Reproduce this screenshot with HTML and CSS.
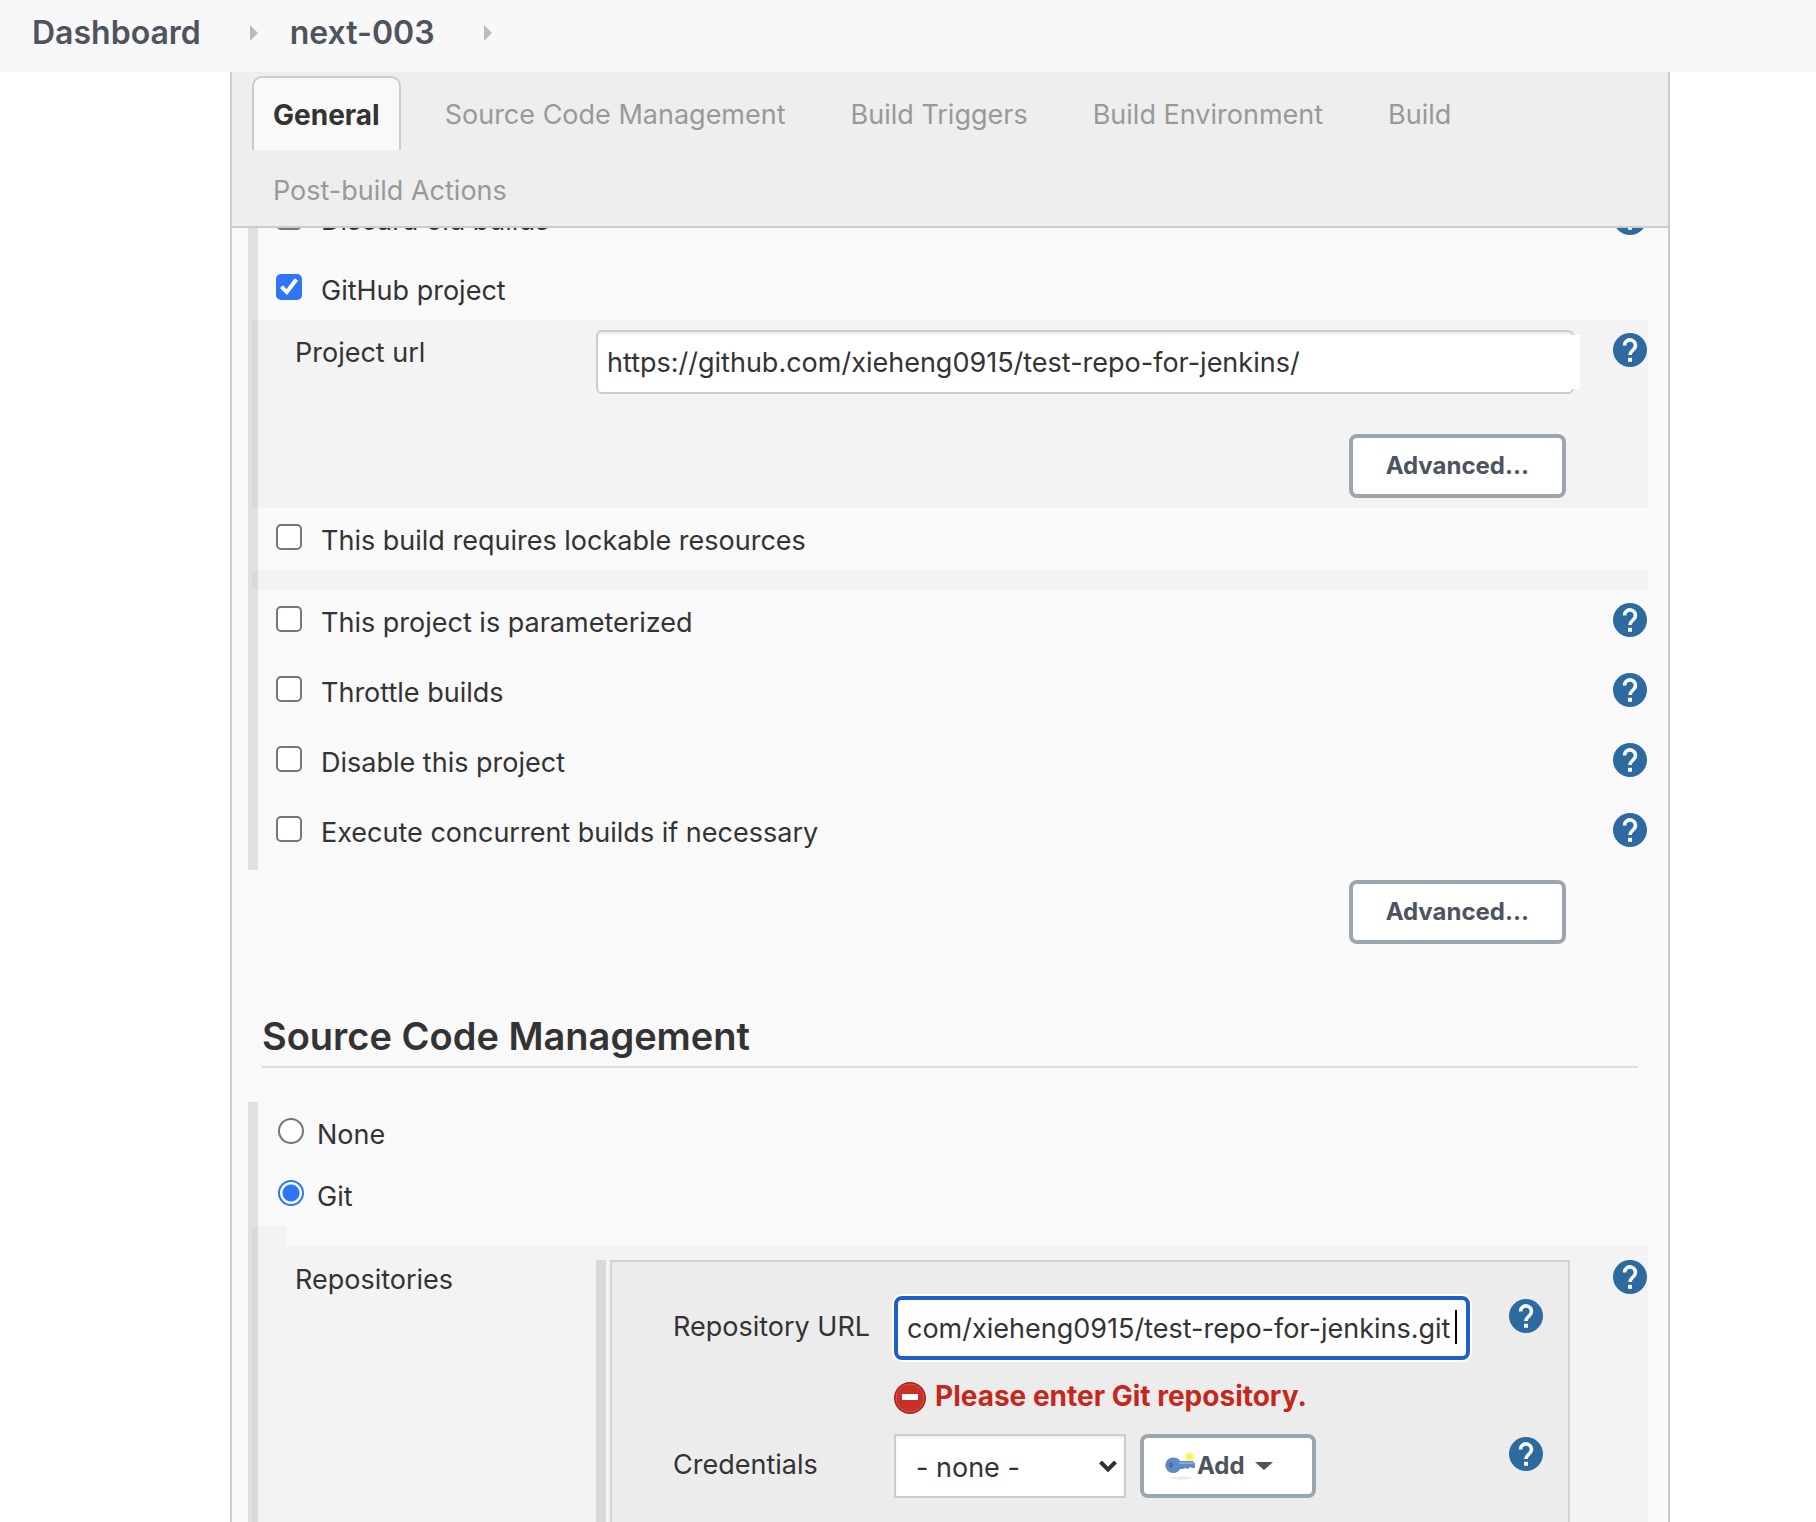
FILE: index.html
```html
<!DOCTYPE html>
<html lang="en">
<head>
<meta charset="utf-8">
<meta name="viewport" content="width=device-width, initial-scale=1">
<title>next-003 Config [Jenkins]</title>
<link rel="stylesheet" href="styles.css">
</head>
<body>
<svg class="sprite" aria-hidden="true">
  <symbol id="help" viewBox="0 0 34 34">
    <circle cx="17" cy="17" r="17" fill="#2c6aa0"/>
    <path d="M11.600 12.400A5.400 5.400 0 1 1 20.700 16.300C18.400 18.400 17 19.300 17 22" fill="none" stroke="#f8f8f8" stroke-width="3.600"/>
    <path d="M15 24.800h4v4h-4z" fill="#f8f8f8"/>
  </symbol>
</svg>

<header class="breadcrumbs">
  <a href="#">Dashboard</a>
  <span class="crumb-arrow"></span>
  <a href="#">next-003</a>
  <span class="crumb-arrow"></span>
</header>

<main class="config">
  <nav class="tabs">
    <a class="tab tab-active" href="#general">General</a>
    <a class="tab" href="#scm">Source Code Management</a>
    <a class="tab" href="#triggers">Build Triggers</a>
    <a class="tab" href="#environment">Build Environment</a>
    <a class="tab" href="#build">Build</a>
    <a class="tab" href="#post-build">Post-build Actions</a>
  </nav>

  <form class="form">
    <section class="section" id="general">
      <div class="row">
        <input class="check" type="checkbox" id="discard"><label for="discard">Discard old builds</label>
        <a class="help" href="#" aria-label="Help"><svg><use href="#help"/></svg></a>
      </div>
      <div class="row row-short">
        <input class="check" type="checkbox" id="github" checked><label for="github">GitHub project</label>
      </div>
      <div class="nested">
        <div class="setting">
          <label class="setting-name" for="project-url">Project url</label>
          <div class="setting-main">
            <div class="url-wrap"><input class="text" type="text" id="project-url" value="https://github.com/xieheng0915/test-repo-for-jenkins/"></div>
          </div>
          <a class="help" href="#" aria-label="Help"><svg><use href="#help"/></svg></a>
        </div>
        <div class="actions"><button class="button" type="button">Advanced...</button></div>
      </div>
      <div class="row row-short">
        <input class="check" type="checkbox" id="lockable"><label for="lockable">This build requires lockable resources</label>
      </div>
      <div class="nested nested-empty"></div>
      <div class="row">
        <input class="check" type="checkbox" id="param"><label for="param">This project is parameterized</label>
        <a class="help" href="#" aria-label="Help"><svg><use href="#help"/></svg></a>
      </div>
      <div class="row">
        <input class="check" type="checkbox" id="throttle"><label for="throttle">Throttle builds</label>
        <a class="help" href="#" aria-label="Help"><svg><use href="#help"/></svg></a>
      </div>
      <div class="row">
        <input class="check" type="checkbox" id="disable"><label for="disable">Disable this project</label>
        <a class="help" href="#" aria-label="Help"><svg><use href="#help"/></svg></a>
      </div>
      <div class="row">
        <input class="check" type="checkbox" id="concurrent"><label for="concurrent">Execute concurrent builds if necessary</label>
        <a class="help" href="#" aria-label="Help"><svg><use href="#help"/></svg></a>
      </div>
    </section>
    <div class="actions actions-section"><button class="button" type="button">Advanced...</button></div>

    <h2 class="heading">Source Code Management</h2>

    <section class="section section-fill" id="scm">
      <div class="row row-short row-radio">
        <input class="radio" type="radio" name="scm" id="none"><label for="none">None</label>
      </div>
      <div class="row row-short row-radio">
        <input class="radio" type="radio" name="scm" id="git" checked><label for="git">Git</label>
      </div>
      <div class="nested nested-stub"></div>
      <div class="nested nested-fill">
        <div class="setting setting-repos">
          <span class="setting-name">Repositories</span>
          <div class="repos">
            <div class="repo">
              <label class="repo-name" for="repo-url">Repository URL</label>
              <div class="focus-wrap"><input class="text text-focus" type="text" id="repo-url" value="com/xieheng0915/test-repo-for-jenkins.git"><span class="caret"></span></div>
              <a class="help" href="#" aria-label="Help"><svg><use href="#help"/></svg></a>
              <p class="error">
                <svg viewBox="0 0 32 32" aria-hidden="true">
                  <circle cx="16" cy="16" r="16" fill="#a5251f"/>
                  <circle cx="16" cy="16" r="14" fill="#cb3028" stroke="#d4564d" stroke-width="1"/>
                  <path d="M8 12h16v6H8z" fill="#fff"/>
                </svg>
                Please enter Git repository.
              </p>
              <label class="repo-name" for="credentials">Credentials</label>
              <div class="credentials">
                <div class="select-wrap">
                  <select class="select" id="credentials"><option>- none -</option></select>
                  <svg viewBox="0 0 18 12" aria-hidden="true"><path d="M1.500 2L9 9.500 16.500 2" fill="none" stroke="#333" stroke-width="4"/></svg>
                </div>
                <button class="button button-add" type="button">
                  <svg class="key" viewBox="0 0 32 32" aria-hidden="true">
                    <ellipse cx="16" cy="28" rx="11" ry="1.500" fill="#ebebeb"/>
                    <circle cx="24.500" cy="7" r="5" fill="#fbf58c"/>
                    <circle cx="24.500" cy="7" r="2" fill="#f7ec4e"/>
                    <path d="M8 7.500c4 0 6 1.500 7 3.500h13l2 3v4h-3l-2-1-2 2-3-1-2 1h-3c-1 2-3 4-7 4a7.500 7.500 0 0 1 0-15.500z" fill="#5f8ac6"/>
                    <path d="M14 13h14" stroke="#86a9d8" stroke-width="2"/>
                    <ellipse cx="6" cy="15" rx="2" ry="3" fill="#4a6fa5"/>
                  </svg>Add<span class="drop"></span>
                </button>
              </div>
              <a class="help" href="#" aria-label="Help"><svg><use href="#help"/></svg></a>
            </div>
          </div>
          <a class="help" href="#" aria-label="Help"><svg><use href="#help"/></svg></a>
        </div>
      </div>
    </section>
  </form>
</main>
</body>
</html>
```
FILE: styles.css
```css
* { box-sizing: border-box; }

body {
  margin: 0;
  min-height: 100vh;
  display: flex;
  flex-direction: column;
  background: #fff;
  color: #333;
  font: 27px/40px Inter, "Liberation Sans", sans-serif;
}

a { color: inherit; text-decoration: none; }
input, select, button { margin: 0; font: inherit; color: inherit; }
.sprite { position: absolute; width: 0; height: 0; }

/* Breadcrumb bar */
.breadcrumbs {
  position: sticky;
  top: 0;
  z-index: 2;
  height: 72px;
  padding: 0 32px 6px;
  display: flex;
  align-items: center;
  background: #f8f8f8;
  color: #4d545d;
  font-size: 32px;
  font-weight: 600;
}
.crumb-arrow {
  margin: 0 32px 0 49px;
  border: solid transparent;
  border-width: 8px 0 8px 8px;
  border-left-color: #bbb;
}

/* Configuration panel */
.config {
  flex: 1;
  display: flex;
  flex-direction: column;
  margin: 0 146px 0 230px;
  border: solid #ccc;
  border-width: 0 2px;
  background: #f9f9f9;
}

.tabs {
  position: sticky;
  top: 72px;
  z-index: 1;
  display: flex;
  flex-wrap: wrap;
  gap: 2px 23px;
  padding: 4px 20px 0;
  border-bottom: 2px solid #ccc;
  background: #eee;
  color: #999;
}
.tab {
  height: 74px;
  padding: 17px 19px 0;
  border: 2px solid transparent;
  border-bottom: 0;
  border-radius: 10px 10px 0 0;
}
.tab-active {
  border-color: #ccc;
  background: #f9f9f9;
  color: #333;
  font-size: 28px;
  font-weight: 700;
}

.form {
  flex: 1;
  display: flex;
  flex-direction: column;
  margin-top: -40px;
  padding: 0 20px 0 16px;
}

.section { border-left: 10px solid #e0e0e0; }
.section-fill { flex: 1; display: flex; flex-direction: column; }

.row {
  display: flex;
  align-items: flex-start;
  gap: 19px;
  height: 70px;
  padding: 12px 0 0 18px;
}
.row-short { height: 62px; }
.row label { padding-top: 1px; }
.row-radio { gap: 13px; padding-left: 20px; }

.check, .radio {
  appearance: none;
  flex: none;
  width: 26px;
  height: 26px;
  margin-top: 4px;
  border: 2px solid #767676;
  background: #fff;
}
.check { border-radius: 5px; }
.radio { border-radius: 50%; }
.check:checked { border-color: #2f76f6; background: #2f76f6; }
.check:checked::after {
  content: "";
  display: block;
  width: 22px;
  height: 22px;
  background: #fff;
  clip-path: polygon(9% 54%, 23% 42%, 38% 60%, 76% 10%, 91% 22%, 41% 86%);
}
.radio:checked {
  border-color: #2f76f6;
  background: radial-gradient(circle, #2f76f6 8px, #fff 9px);
}

.help {
  flex: none;
  width: 34px;
  height: 34px;
  margin: 1px 1px 0 auto;
}
.help svg { display: block; width: 34px; height: 34px; }

/* Settings revealed by a ticked option */
.nested { margin-left: -6px; background: rgba(0, 0, 0, .025); }
.nested-empty { height: 20px; }
.nested-stub { width: 34px; height: 20px; }
.nested-fill { flex: 1; display: flex; }

.setting {
  display: grid;
  grid-template-columns: 301px 1fr 74px;
  padding: 10px 0 0 43px;
}
.setting-name { padding-top: 3px; }
.setting .help { margin-top: 3px; }

.url-wrap { position: relative; }
.url-wrap::after {
  content: "";
  position: absolute;
  top: 5px;
  right: -6px;
  width: 10px;
  height: 54px;
  background: #fff;
}
.text {
  display: block;
  width: 100%;
  height: 64px;
  padding: 0 9px;
  border: 2px solid #ccc;
  border-radius: 6px;
  background: #fff;
  box-shadow: inset 0 2px 2px rgba(0, 0, 0, .075);
}

.actions { padding: 40px 82px 10px 0; text-align: right; }
.actions-section { padding-top: 10px; }
.button {
  height: 64px;
  padding: 0 33px;
  border: 4px solid #9aa5ad;
  border-radius: 8px;
  background: #fff;
  color: #4d545d;
  font-size: 24px;
  font-weight: 700;
  vertical-align: top;
}

.heading {
  margin: 56px 10px 34px 14px;
  padding-bottom: 4px;
  border-bottom: 2px solid #ddd;
  font-size: 38px;
  line-height: 52px;
  font-weight: 600;
}

/* Git repositories */
.setting-repos { flex: 1; padding-top: 14px; }
.setting-repos > .setting-name { padding-top: 0; }
.setting-repos > .help { margin-top: 0; }
.repos {
  margin-right: 4px;
  padding-left: 4px;
  border-left: 10px solid #d9d9d9;
}
.repo {
  height: 100%;
  display: grid;
  grid-template-columns: 221px 1fr 74px;
  grid-template-rows: 64px 74px 64px;
  align-content: start;
  padding: 34px 24px 24px 61px;
  border: 2px solid #d3d3d3;
  border-bottom: 0;
  background: #ececec;
}
.repo-name { padding-top: 11px; }

.focus-wrap { position: relative; }
.text-focus {
  padding: 0 9px;
  border: 4px solid #1f5fcb;
  border-radius: 8px;
  box-shadow: 0 0 0 2px #fff;
}
.caret {
  position: absolute;
  top: 14px;
  right: 13px;
  width: 2px;
  height: 34px;
  background: #000;
}

.error {
  grid-column: 2 / -1;
  display: flex;
  gap: 9px;
  margin: 0;
  padding-top: 16px;
  color: #c4281c;
  font-size: 28px;
  font-weight: 700;
}
.error svg { width: 32px; height: 32px; margin-top: 6px; }

.credentials { display: flex; gap: 14px; }
.select-wrap { position: relative; width: 232px; }
.select-wrap svg {
  position: absolute;
  top: 26px;
  right: 9px;
  width: 18px;
  height: 12px;
}
.select {
  appearance: none;
  width: 100%;
  height: 64px;
  padding: 4px 20px 0;
  border: 2px solid #ccc;
  border-radius: 0;
  background: #fff;
  box-shadow: inset 0 2px 2px rgba(0, 0, 0, .075);
}
.button-add {
  width: 176px;
  padding: 0 21px;
  display: flex;
  align-items: center;
}
.key { width: 32px; height: 32px; }
.drop {
  margin-left: 10px;
  border: solid transparent;
  border-width: 8px 9px 0;
  border-top-color: #4d545d;
}
```
